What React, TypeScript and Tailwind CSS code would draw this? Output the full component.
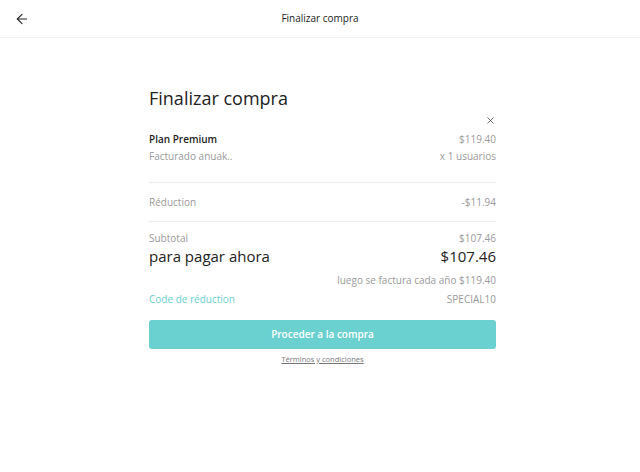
import { ArrowLeft, X } from 'lucide-react'

export default function App() {
  return (
    <div className="min-h-screen bg-white text-[#333] font-['Open_Sans',sans-serif]">
      {/* Header */}
      <div className="relative flex h-[38px] items-center justify-center border-b border-[#f0f0f0]">
        <button className="absolute left-[14px] top-[11px] text-[#222]">
          <ArrowLeft size={16} strokeWidth={1.6} />
        </button>
        <span className="text-[10px] text-[#222]">Finalizar compra</span>
      </div>

      <div className="pl-[5px]">
        <div className="mx-auto w-[347px] pt-[48px]">
          <h1 className="text-[18px] leading-[24px] text-[#222]">Finalizar compra</h1>

          <div className="mt-[5px] flex justify-end">
            <X size={11} strokeWidth={1.6} className="text-[#333]" />
          </div>

          <div className="mt-[5px] flex items-center justify-between text-[10px] leading-[17px]">
            <span className="font-semibold text-[#222]">Plan Premium</span>
            <span className="text-[#999]">$119.40</span>
          </div>
          <div className="flex items-center justify-between text-[10px] leading-[17px] text-[#999]">
            <span>Facturado anuak..</span>
            <span>x 1 usuarios</span>
          </div>

          <div className="mt-[17px] border-t border-[#ececec]" />

          <div className="flex items-center justify-between py-[10px] text-[10px] leading-[18px] text-[#999]">
            <span>Réduction</span>
            <span>-$11.94</span>
          </div>

          <div className="border-t border-[#ececec]" />

          <div className="mt-[8px] flex items-center justify-between text-[10px] leading-[16px] text-[#999]">
            <span>Subtotal</span>
            <span>$107.46</span>
          </div>
          <div className="flex items-center justify-between text-[15px] leading-[20px] text-[#222]">
            <span>para pagar ahora</span>
            <span>$107.46</span>
          </div>
          <div className="mt-[5px] text-right text-[10px] leading-[18px] text-[#999]">
            luego se factura cada año $119.40
          </div>
          <div className="flex items-center justify-between text-[10px] leading-[20px]">
            <span className="text-[#6acfcf]">Code de réduction</span>
            <span className="text-[#999]">SPECIAL10</span>
          </div>

          <button className="mt-[11px] flex h-[29px] w-full items-center justify-center rounded-[3px] bg-[#6ad0d0] text-[10px] font-semibold text-white">
            Proceder a la compra
          </button>

          <div className="mt-[4px] text-center text-[7.5px] leading-[12px]">
            <a className="text-[#777] underline">Términos y condiciones</a>
          </div>
        </div>
      </div>
    </div>
  )
}
